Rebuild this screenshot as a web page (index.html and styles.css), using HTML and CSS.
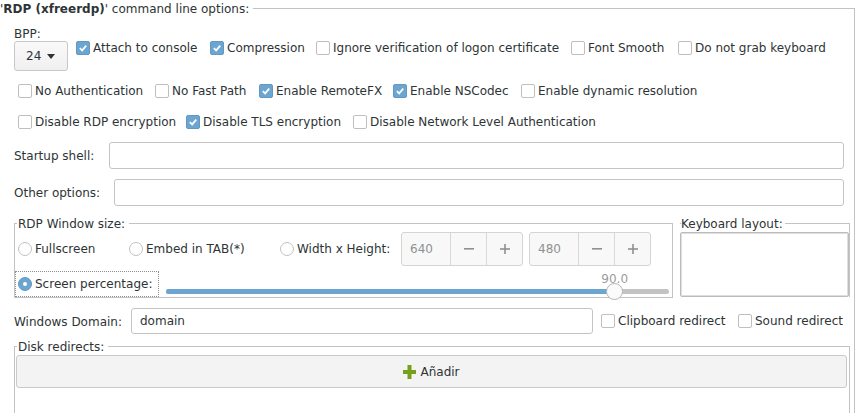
FILE: index.html
```html
<!DOCTYPE html>
<html>
<head>
<meta charset="utf-8">
<link rel="stylesheet" href="styles.css">
</head>
<body>
<fieldset class="outer">
  <legend class="title">'<b>RDP (xfreerdp)</b>' command line options:</legend>
  <div class="content">
    <div class="row1">
      <div class="bpp">
        <div class="bpp-label">BPP:</div>
        <div class="combo"><span>24</span><span class="arrow"></span></div>
      </div>
      <div class="checks r1">
        <div class="chk"><span class="box on"><svg viewBox="0 0 14 14"><path d="M3.3 7.2 L6 9.8 L10.8 4.2" /></svg></span>Attach to console</div>
        <div class="chk"><span class="box on"><svg viewBox="0 0 14 14"><path d="M3.3 7.2 L6 9.8 L10.8 4.2" /></svg></span>Compression</div>
        <div class="chk"><span class="box"></span>Ignore verification of logon certificate</div>
        <div class="chk"><span class="box"></span>Font Smooth</div>
        <div class="chk"><span class="box"></span>Do not grab keyboard</div>
      </div>
    </div>
    <div class="checks r2">
      <div class="chk"><span class="box"></span>No Authentication</div>
      <div class="chk"><span class="box"></span>No Fast Path</div>
      <div class="chk"><span class="box on"><svg viewBox="0 0 14 14"><path d="M3.3 7.2 L6 9.8 L10.8 4.2" /></svg></span>Enable RemoteFX</div>
      <div class="chk"><span class="box on"><svg viewBox="0 0 14 14"><path d="M3.3 7.2 L6 9.8 L10.8 4.2" /></svg></span>Enable NSCodec</div>
      <div class="chk"><span class="box"></span>Enable dynamic resolution</div>
    </div>
    <div class="checks r3">
      <div class="chk"><span class="box"></span>Disable RDP encryption</div>
      <div class="chk"><span class="box on"><svg viewBox="0 0 14 14"><path d="M3.3 7.2 L6 9.8 L10.8 4.2" /></svg></span>Disable TLS encryption</div>
      <div class="chk"><span class="box"></span>Disable Network Level Authentication</div>
    </div>
    <div class="field-row startup">
      <span class="lbl">Startup shell:</span>
      <div class="entry"></div>
    </div>
    <div class="field-row other">
      <span class="lbl">Other options:</span>
      <div class="entry"></div>
    </div>
    <div class="frames">
      <fieldset class="frame winsize">
        <legend>RDP Window size:</legend>
        <div class="ws-row1">
          <div class="rad w-full"><span class="radio"></span>Fullscreen</div>
          <div class="rad w-embed"><span class="radio"></span>Embed in TAB(*)</div>
          <div class="rad w-wh"><span class="radio"></span>Width x Height:</div>
          <div class="spin">
            <div class="spin-val">640</div>
            <div class="spin-btn"><svg viewBox="0 0 10 10"><rect x="0" y="4" width="10" height="1.6"/></svg></div>
            <div class="spin-btn"><svg viewBox="0 0 10 10"><rect x="0" y="4.2" width="10" height="1.6"/><rect x="4.2" y="0" width="1.6" height="10"/></svg></div>
          </div>
          <div class="spin spin2">
            <div class="spin-val">480</div>
            <div class="spin-btn"><svg viewBox="0 0 10 10"><rect x="0" y="4" width="10" height="1.6"/></svg></div>
            <div class="spin-btn"><svg viewBox="0 0 10 10"><rect x="0" y="4.2" width="10" height="1.6"/><rect x="4.2" y="0" width="1.6" height="10"/></svg></div>
          </div>
        </div>
        <div class="ws-row2">
          <div class="focus"><span class="radio on"></span>Screen percentage:</div>
          <div class="slider">
            <div class="track">
              <div class="fill" style="width:89.07%">
                <div class="slider-value">90.0</div>
                <div class="knob"></div>
              </div>
            </div>
          </div>
        </div>
      </fieldset>
      <fieldset class="frame kbd">
        <legend>Keyboard layout:</legend>
        <div class="kbd-box"></div>
      </fieldset>
    </div>
    <div class="field-row domain">
      <span class="lbl">Windows Domain:</span>
      <div class="entry">domain</div>
      <div class="chk clip"><span class="box"></span>Clipboard redirect</div>
      <div class="chk"><span class="box"></span>Sound redirect</div>
    </div>
    <fieldset class="frame disk">
      <legend>Disk redirects:</legend>
      <div class="add-btn">
        <svg class="plus" viewBox="0 0 13 14"><rect x="4.5" y="0" width="4" height="14"/><rect x="0" y="5" width="13" height="4"/></svg>
        <span>Añadir</span>
      </div>
    </fieldset>
  </div>
</fieldset>
</body>
</html>
```

FILE: styles.css
```css
html, body {
  margin: 0;
  padding: 0;
  overflow: hidden;
  background: #ffffff;
}

body {
  font-family: "DejaVu Sans", sans-serif;
  font-size: 12px;
  line-height: 14px;
  color: #2e3436;
}

fieldset {
  margin: 0;
  padding: 0;
  border: 1px solid #c3c3c3;
  min-width: 0;
}

legend {
  padding: 0;
}

.outer {
  margin-left: -6px;
  width: 861px;
  box-sizing: border-box;
  height: 460px;
}

.title {
  margin-left: 5px;
  padding: 1px 4px 0 0;
  line-height: 16px;
  white-space: nowrap;
}

.content {
  margin: 0 4px 0 19px;
}

/* first row */
.row1 {
  display: flex;
  align-items: flex-start;
  margin-top: 10px;
}

.bpp-label {
  height: 14px;
}

.combo {
  margin-top: 0;
  width: 54px;
  height: 30px;
  box-sizing: border-box;
  border: 1px solid #c8c8c8;
  border-radius: 3px;
  background: linear-gradient(#f9f9f9, #f0f0f0);
  display: flex;
  align-items: center;
  padding-left: 11px;
}

.arrow {
  width: 0;
  height: 0;
  margin-left: 6px;
  margin-top: 1px;
  border-left: 4px solid transparent;
  border-right: 4px solid transparent;
  border-top: 5px solid #2e3436;
}

.checks {
  display: grid;
}

.checks.r1 {
  margin-top: 14px;
  margin-left: 8px;
  grid-template-columns: 134px 106px 255px 107px auto;
}

.checks.r2 {
  margin: 13px 0 0 4px;
  grid-template-columns: 137px 104px 134px 128px auto;
}

.checks.r3 {
  margin: 17px 0 0 4px;
  grid-template-columns: 168px 167px auto;
}

.chk {
  display: flex;
  align-items: center;
  height: 14px;
  white-space: nowrap;
}

.box {
  flex: none;
  width: 14px;
  height: 14px;
  box-sizing: border-box;
  border: 1px solid #bfbfbf;
  border-radius: 2px;
  background: #ffffff;
  margin-right: 3px;
  display: flex;
}

.box.on {
  background: #6ca6d0;
  border-color: #6199c4;
}

.box svg {
  width: 12px;
  height: 12px;
}

.box svg path {
  fill: none;
  stroke: #ffffff;
  stroke-width: 2;
}

/* entry rows */
.field-row {
  display: flex;
  align-items: center;
  height: 27px;
}

.field-row .entry {
  flex: 1;
  align-self: stretch;
  margin-right: 6px;
  border: 1px solid #c4c4c4;
  border-radius: 3px;
  background: #ffffff;
}

.startup {
  margin-top: 13px;
}

.startup .lbl {
  width: 95px;
}

.other {
  margin-top: 10px;
}

.other .lbl {
  width: 100px;
}

/* frames */
.frames {
  display: flex;
  align-items: flex-start;
  margin-top: 10px;
}

.frame legend {
  margin-left: 2px;
  padding: 1px 4px 0 1px;
  line-height: 14px;
  white-space: nowrap;
}

.winsize {
  width: 659px;
  box-sizing: border-box;
  flex: none;
}

.ws-row1 {
  display: flex;
  align-items: center;
  height: 34px;
  margin-top: 1px;
  padding-left: 3px;
}

.rad {
  display: flex;
  align-items: center;
  white-space: nowrap;
}

.w-full { width: 111px; }
.w-embed { width: 151px; }
.w-wh { width: 121px; }

.radio {
  flex: none;
  position: relative;
  width: 14px;
  height: 14px;
  box-sizing: border-box;
  border: 1px solid #c2c2c2;
  border-radius: 50%;
  background: #ffffff;
  margin-right: 3px;
}

.radio.on {
  background: #6ca6d0;
  border-color: #6199c4;
}

.radio.on::after {
  content: "";
  position: absolute;
  left: 4px;
  top: 4px;
  width: 4px;
  height: 4px;
  border-radius: 50%;
  background: #ffffff;
}

.spin {
  display: flex;
  width: 122px;
  height: 34px;
  box-sizing: border-box;
  border: 1px solid #d4d4d4;
  border-radius: 3px;
  background: #f8f8f8;
  flex: none;
}

.spin2 {
  margin-left: 6px;
}

.spin-val {
  width: 48px;
  padding-left: 8px;
  box-sizing: border-box;
  display: flex;
  align-items: center;
  color: #8e9192;
}

.spin-btn {
  flex: 1;
  border-left: 1px solid #d8d8d8;
  display: flex;
  align-items: center;
  justify-content: center;
}

.spin-btn svg {
  width: 10px;
  height: 10px;
  fill: #8e9192;
}

.ws-row2 {
  display: flex;
  align-items: flex-start;
  margin-top: 5px;
  height: 26px;
}

.focus {
  width: 144px;
  height: 26px;
  box-sizing: border-box;
  border: 1px dotted #8e8e8e;
  display: flex;
  align-items: center;
  padding-left: 2px;
  white-space: nowrap;
  flex: none;
}

.slider {
  flex: 1;
  margin: 0 3px 0 7px;
}

.track {
  margin-top: 18px;
  height: 5px;
  border-radius: 3px;
  background: #c3c3c3;
}

.fill {
  position: relative;
  height: 100%;
  border-radius: 3px;
  background: #6ca6d0;
}

.knob {
  position: absolute;
  right: -9px;
  top: -6px;
  width: 17px;
  height: 17px;
  box-sizing: border-box;
  border-radius: 50%;
  border: 1px solid #b5b5b5;
  background: #fbfbfb;
}

.slider-value {
  position: absolute;
  right: -14px;
  top: -17px;
  color: #9c9c9c;
}

.kbd {
  flex: 1;
  margin-left: 7px;
  border-left: none;
  border-bottom: none;
}

.kbd legend {
  margin-left: 1px;
  padding: 1px 2px 0 0;
}

.kbd-box {
  margin-top: 1px;
  height: 65px;
  box-sizing: border-box;
  border: 1px solid #bcbcbc;
  box-shadow: inset 0 0 0 1px #dedede;
  border-radius: 2px;
  background: #ffffff;
}

/* domain row */
.domain {
  margin-top: 10px;
  height: 26px;
}

.domain .lbl {
  width: 117px;
  padding-top: 1px;
}

.domain .entry {
  flex: none;
  width: 462px;
  margin-right: 0;
  padding-left: 8px;
  box-sizing: border-box;
  display: flex;
  align-items: center;
}

.chk.clip {
  margin-left: 8px;
  width: 137px;
}

/* disk redirects */
.disk {
  margin-top: 5px;
  padding-bottom: 40px;
}

.add-btn {
  margin: 1px 2px 0 1px;
  height: 33px;
  box-sizing: border-box;
  border: 1px solid #cacaca;
  border-radius: 3px;
  background: #f3f3f3;
  display: flex;
  align-items: center;
  justify-content: center;
}

.plus {
  width: 13px;
  height: 14px;
  fill: #76a01a;
  margin-right: 4px;
}
```
